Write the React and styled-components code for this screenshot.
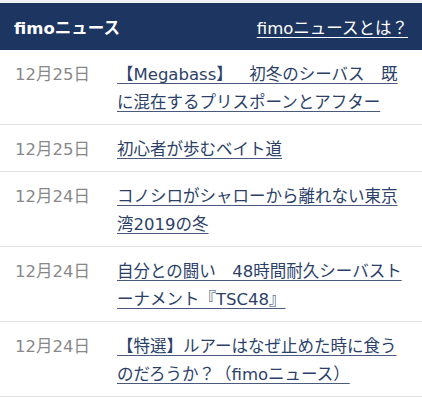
import styled, { createGlobalStyle } from "styled-components";

const GlobalStyle = createGlobalStyle`
  html, body {
    margin: 0;
    padding: 0;
    background: #ffffff;
  }
  body {
    font-family: "DejaVu Sans", "Noto Sans CJK JP", sans-serif;
  }
`;

const news = [
  { date: "12月25日", title: "【Megabass】　初冬のシーバス　既に混在するプリスポーンとアフター" },
  { date: "12月25日", title: "初心者が歩むベイト道" },
  { date: "12月24日", title: "コノシロがシャローから離れない東京湾2019の冬" },
  { date: "12月24日", title: "自分との闘い　48時間耐久シーバストーナメント『TSC48』" },
  { date: "12月24日", title: "【特選】ルアーはなぜ止めた時に食うのだろうか？（fimoニュース）" },
];

const Page = styled.div`
  width: 422px;
  padding-top: 3px;
  background: #eef1f5;
`;

const Header = styled.header`
  height: 47px;
  background: #1d3561;
  display: flex;
  align-items: center;
  justify-content: space-between;
  padding: 0 14px 0 14px;
  color: #ffffff;
`;

const Brand = styled.h1`
  margin: 0;
  font-size: 16.5px;
  font-weight: 700;
`;

const AboutLink = styled.a`
  color: #ffffff;
  font-size: 16.5px;
  text-decoration: underline;
  text-underline-offset: 3px;
`;

const List = styled.ul`
  list-style: none;
  margin: 0;
  padding: 0;
  background: #ffffff;
`;

const Row = styled.li`
  display: grid;
  grid-template-columns: 102px 1fr;
  padding: 11px 12px 7px 15px;
  border-bottom: 1px solid #e3e3e3;
  font-size: 16.5px;
  line-height: 28px;
  text-spacing-trim: space-all;
`;

const Date = styled.span`
  color: #888888;
`;

const Title = styled.a`
  color: #2c3f68;
  text-decoration: underline;
  text-underline-offset: 3px;
  text-decoration-color: #4a5a7c;
`;

export default function App() {
  return (
    <Page>
      <GlobalStyle />
      <Header>
        <Brand>fimoニュース</Brand>
        <AboutLink href="#">fimoニュースとは？</AboutLink>
      </Header>
      <List>
        {news.map((item, i) => (
          <Row key={i}>
            <Date>{item.date}</Date>
            <div>
              <Title href="#">{item.title}</Title>
            </div>
          </Row>
        ))}
      </List>
    </Page>
  );
}
